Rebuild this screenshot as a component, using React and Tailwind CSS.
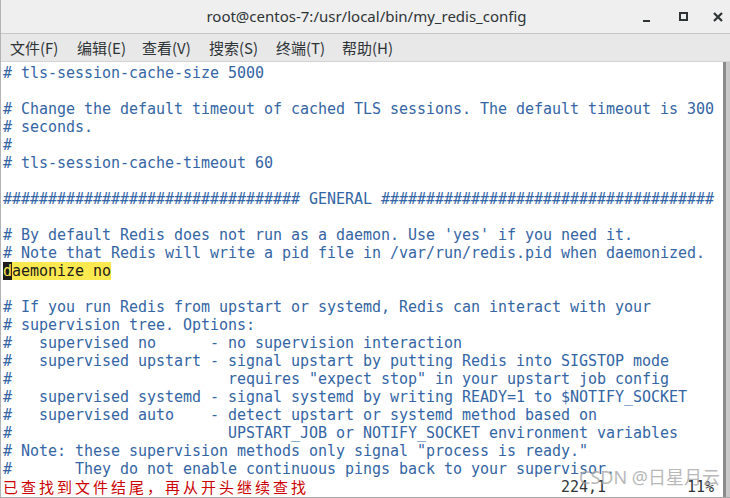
import React from "react";

const lines = [
  "# tls-session-cache-size 5000",
  "",
  "# Change the default timeout of cached TLS sessions. The default timeout is 300",
  "# seconds.",
  "#",
  "# tls-session-cache-timeout 60",
  "",
  "################################# GENERAL #####################################",
  "",
  "# By default Redis does not run as a daemon. Use 'yes' if you need it.",
  "# Note that Redis will write a pid file in /var/run/redis.pid when daemonized.",
  null,
  "",
  "# If you run Redis from upstart or systemd, Redis can interact with your",
  "# supervision tree. Options:",
  "#   supervised no      - no supervision interaction",
  "#   supervised upstart - signal upstart by putting Redis into SIGSTOP mode",
  '#                        requires "expect stop" in your upstart job config',
  "#   supervised systemd - signal systemd by writing READY=1 to $NOTIFY_SOCKET",
  "#   supervised auto    - detect upstart or systemd method based on",
  "#                        UPSTART_JOB or NOTIFY_SOCKET environment variables",
  '# Note: these supervision methods only signal "process is ready."',
  "#       They do not enable continuous pings back to your supervisor.",
];

const menu = [
  ["文件(F)", "w-[67px]"],
  ["编辑(E)", "w-[65px]"],
  ["查看(V)", "w-[67px]"],
  ["搜索(S)", "w-[67px]"],
  ["终端(T)", "w-[66px]"],
  ["帮助(H)", "w-[66px]"],
];

const status = "已查找到文件结尾，再从开头继续查找".split("");

export default function App() {
  return (
    <div className="relative w-[730px] h-[498px] flex flex-col overflow-hidden bg-white border-l border-[#b4b4b4] border-b border-b-[#a8a8a8]">
      {/* title bar */}
      <div className="h-[34px] shrink-0 grid grid-cols-[1fr_auto_1fr] items-center bg-[#efefef] border-b border-[#c6c6c6]">
        <div />
        <div className="text-[15px] text-[#2e3436] font-['Noto_Sans',sans-serif] pl-[2px]">
          root@centos-7:/usr/local/bin/my_redis_config
        </div>
        <div className="flex items-center justify-end h-full pr-[7px]">
          <svg width="10" height="10" viewBox="0 0 10 10" className="mr-[27px] mt-[2px]">
            <rect x="1" y="7" width="7" height="2" fill="#2e3436" />
          </svg>
          <svg width="10" height="10" viewBox="0 0 10 10" className="mr-[24px]">
            <rect x="1" y="1" width="7" height="7" fill="none" stroke="#2e3436" strokeWidth="2" />
          </svg>
          <svg width="10" height="10" viewBox="0 0 10 10">
            <path d="M1 1 L9 9 M9 1 L1 9" stroke="#2e3436" strokeWidth="2.2" />
          </svg>
        </div>
      </div>
      {/* menu bar */}
      <div className="h-[28px] shrink-0 flex items-center pl-[9px] pt-[1px] bg-[#e8e8e8] border-b border-[#d4d4d4] text-[15px] text-[#2e3436] font-['Noto_Sans_CJK_SC','Noto_Sans',sans-serif]">
        {menu.map(([t, w]) => (
          <div key={t} className={w}>{t}</div>
        ))}
      </div>
      {/* terminal */}
      <div className="flex-1 flex min-h-0">
        <div className="flex-1 pl-[2px] pt-[2px] font-['DejaVu_Sans_Mono',monospace] text-[15px] leading-[18px] tracking-[-0.03px] text-[#3465a4] whitespace-pre">
          {lines.map((l, i) =>
            l === null ? (
              <div key={i} className="h-[18px]">
                <span className="bg-[#fce94f] text-[#1c1c1c]"><span className="bg-[#1c1c1c] text-[#fce94f]">d</span>aemonize no</span>
              </div>
            ) : (
              <div key={i} className="h-[18px]">{l}</div>
            )
          )}
          <div className="h-[18px] flex">
            {status.map((c, i) => (
              <span key={i} className="inline-block w-[18px] text-[15px] text-[#cc0000] font-['Noto_Sans_CJK_SC',sans-serif] leading-[18px]">{c}</span>
            ))}
            <span className="text-[#2e3436]">{"                            224,1         11%"}</span>
          </div>
        </div>
        <div className="w-[7px] shrink-0 border-l-[3px] border-[#8c8c8c] bg-[#c9c9c9]" />
      </div>
      {/* watermark */}
      <div className="absolute left-[578px] top-[464px] text-[18px] text-[#a8a8a8] opacity-80 font-['Noto_Sans','Noto_Sans_CJK_SC',sans-serif] whitespace-pre">
        CSDN @日星月云
      </div>
    </div>
  );
}
